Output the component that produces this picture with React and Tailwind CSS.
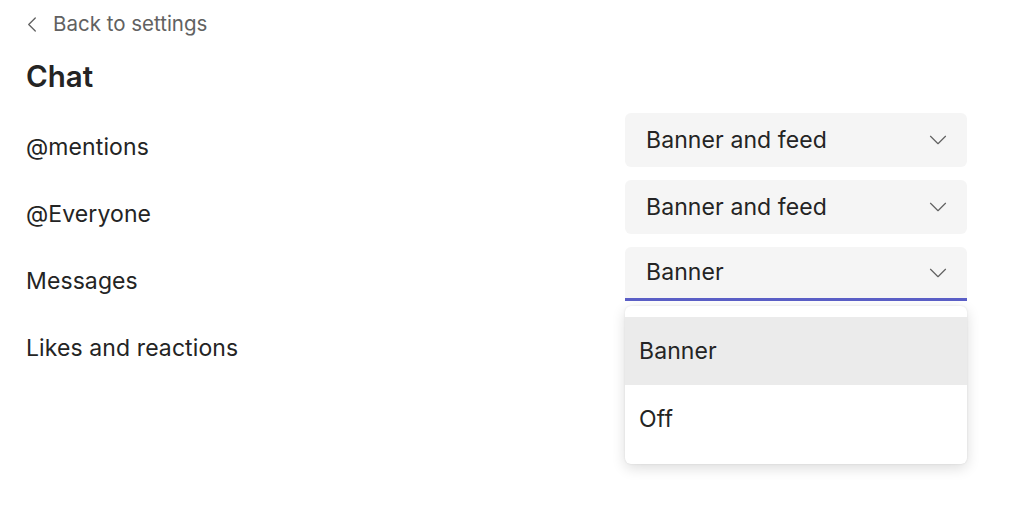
import React from 'react';

const font = { fontFamily: 'Inter, "Noto Sans", sans-serif' };

function Chevron({ className }) {
  return (
    <svg viewBox="0 0 20 12" className={className} fill="none" stroke="currentColor" strokeWidth="1.4" strokeLinecap="round" strokeLinejoin="round">
      <path d="M1 1.5l9 9 9-9" />
    </svg>
  );
}

function Select({ value, open }) {
  return (
    <div className="relative w-[342px]">
      <div className={`flex h-[54px] items-center justify-between rounded-md bg-[#f5f5f5] pl-[21px] pr-[19px] ${open ? 'rounded-b-none border-b-[3px] border-[#5b5fc7]' : ''}`}>
        <span className="text-[23px] tracking-[0.1px] text-[#242424]">{value}</span>
        <Chevron className="h-[10px] w-[20px] text-[#616161]" />
      </div>
      {open && (
        <div className="absolute left-0 top-[59px] z-10 w-[342px] rounded-md bg-white py-[11px] shadow-[0_4px_14px_rgba(0,0,0,0.14),0_0_2px_rgba(0,0,0,0.1)]">
          <div className="flex h-[68px] items-center bg-[#ebebeb] px-[14px] text-[23px] tracking-[0.1px] text-[#242424]">Banner</div>
          <div className="flex h-[68px] items-center px-[14px] text-[23px] tracking-[0.1px] text-[#242424]">Off</div>
        </div>
      )}
    </div>
  );
}

const rows = [
  { label: '@mentions', value: 'Banner and feed' },
  { label: '@Everyone', value: 'Banner and feed' },
  { label: 'Messages', value: 'Banner', open: true },
  { label: 'Likes and reactions' },
];

export default function App() {
  return (
    <div className="h-[510px] w-[1024px] overflow-hidden bg-white" style={font}>
      <div className="pl-[27px] pt-[10px]">
        <div className="flex h-[28px] items-center gap-[16px] text-[20.5px] text-[#616161]">
          <svg viewBox="0 0 10 16" className="h-[15px] w-[10px]" fill="none" stroke="currentColor" strokeWidth="1.4" strokeLinecap="round" strokeLinejoin="round">
            <path d="M8.5 1L1.5 8l7 7" />
          </svg>
          <span>Back to settings</span>
        </div>
        <h1 className="-ml-[1px] mt-[20px] text-[29.5px] font-semibold leading-[36px] text-[#242424]">Chat</h1>
        <div className="-ml-[1px] mt-[19px] flex flex-col gap-[13px] pr-[57px]">
          {rows.map((row) => (
            <div key={row.label} className="flex h-[54px] items-start justify-between">
              <span className="pt-[19px] text-[23px] tracking-[0.1px] leading-[30px] text-[#242424]">{row.label}</span>
              {row.value && <Select value={row.value} open={row.open} />}
            </div>
          ))}
        </div>
      </div>
    </div>
  );
}
